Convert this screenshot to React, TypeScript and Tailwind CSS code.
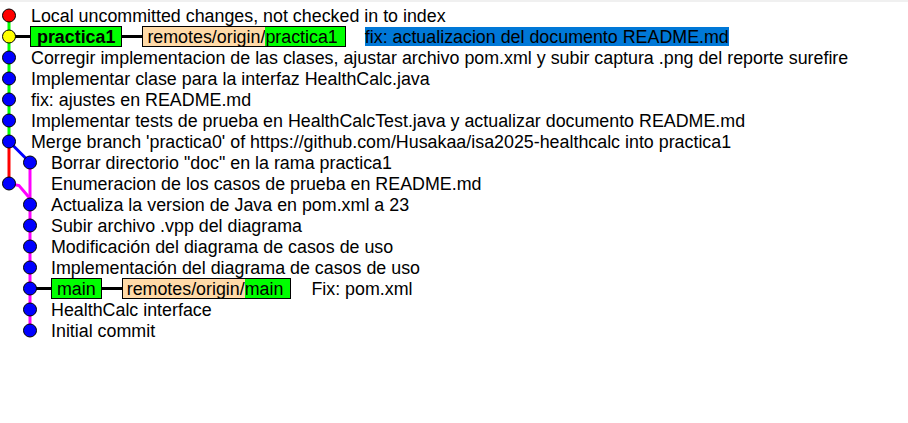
const ROW = 21;
const TOP = 5;
const cy = (i: number) => TOP + ROW * i + 10.5;
const cx = (c: number) => (c === 0 ? 9 : 30);

type Commit = {
  col: number;
  indent: number;
  text: string;
  fill: string;
};

const commits: Commit[] = [
  { col: 0, indent: 0, text: "Local uncommitted changes, not checked in to index", fill: "#ff0000" },
  { col: 0, indent: 0, text: "fix: actualizacion del documento README.md", fill: "#ffff00" },
  { col: 0, indent: 0, text: "Corregir implementacion de las clases, ajustar archivo pom.xml y subir captura .png del reporte surefire", fill: "#0000ff" },
  { col: 0, indent: 0, text: "Implementar clase para la interfaz HealthCalc.java", fill: "#0000ff" },
  { col: 0, indent: 0, text: "fix: ajustes en README.md", fill: "#0000ff" },
  { col: 0, indent: 0, text: "Implementar tests de prueba en HealthCalcTest.java y actualizar documento README.md", fill: "#0000ff" },
  { col: 0, indent: 0, text: "Merge branch 'practica0' of https://github.com/Husakaa/isa2025-healthcalc into practica1", fill: "#0000ff" },
  { col: 1, indent: 1, text: "Borrar directorio \"doc\" en la rama practica1", fill: "#0000ff" },
  { col: 0, indent: 1, text: "Enumeracion de los casos de prueba en README.md", fill: "#0000ff" },
  { col: 1, indent: 1, text: "Actualiza la version de Java en pom.xml a 23", fill: "#0000ff" },
  { col: 1, indent: 1, text: "Subir archivo .vpp del diagrama", fill: "#0000ff" },
  { col: 1, indent: 1, text: "Modificación del diagrama de casos de uso", fill: "#0000ff" },
  { col: 1, indent: 1, text: "Implementación del diagrama de casos de uso", fill: "#0000ff" },
  { col: 1, indent: 1, text: "Fix: pom.xml", fill: "#0000ff" },
  { col: 1, indent: 1, text: "HealthCalc interface", fill: "#0000ff" },
  { col: 1, indent: 1, text: "Initial commit", fill: "#0000ff" },
];

function Graph() {
  return (
    <svg
      className="absolute left-0 top-0"
      width={60}
      height={TOP + ROW * commits.length + 4}
    >
      <line x1={9} y1={cy(0)} x2={9} y2={cy(6)} stroke="#00ff00" strokeWidth={3} />
      <line x1={9} y1={cy(6)} x2={9} y2={cy(8)} stroke="#ff0000" strokeWidth={3} />
      <line x1={9} y1={cy(6)} x2={30} y2={cy(7)} stroke="#0000ff" strokeWidth={3} />
      <line x1={30} y1={cy(7)} x2={30} y2={cy(15)} stroke="#ff00ff" strokeWidth={3} />
      <polyline
        points={`9,${cy(8)} 19,${cy(8) + 2} 30,${cy(8) + 15}`}
        fill="none"
        stroke="#ff00ff"
        strokeWidth={3}
      />
      <line x1={9} y1={cy(1)} x2={31} y2={cy(1)} stroke="#000" strokeWidth={3} />
      <line x1={30} y1={cy(13)} x2={52} y2={cy(13)} stroke="#000" strokeWidth={3} />
      {commits.map((c, i) => (
        <circle key={i} cx={cx(c.col)} cy={cy(i)} r={6.5} fill={c.fill} stroke="#000" strokeWidth={1} />
      ))}
    </svg>
  );
}

function Link() {
  return <div className="w-[20px] h-[3px] bg-black shrink-0" />;
}

function RemoteTag({ branch }: { branch: string }) {
  return (
    <div className="flex h-[21px] items-stretch border border-black shrink-0">
      <span className="bg-[#ffdaa8] pl-[4px] leading-[20px]">remotes/origin/</span>
      <span className="bg-[#00ff00] pr-[7px] leading-[20px]">{branch}</span>
    </div>
  );
}

export default function App() {
  return (
    <div
      className="relative w-[908px] h-[423px] bg-white text-black text-[17.85px] overflow-hidden"
      style={{ fontFamily: '"Liberation Sans", Arial, sans-serif' }}
    >
      <div className="h-[2px] bg-[#f0f0f0]" />
      <Graph />
      <div className="relative flex flex-col pt-[3px]">
        {commits.map((c, i) => {
          const pl = c.indent === 0 ? "pl-[31px]" : "pl-[51px]";
          if (i === 1) {
            return (
              <div key={i} className="flex h-[21px] items-center whitespace-nowrap pl-[30px]">
                <div className="h-[21px] border border-black bg-[#00ff00] px-[6px] font-bold leading-[20px]">
                  practica1
                </div>
                <Link />
                <RemoteTag branch="practica1" />
                <span className="ml-[19px] bg-[#0078d7] px-0 leading-[20px] h-[19px]">{c.text}</span>
              </div>
            );
          }
          if (i === 13) {
            return (
              <div key={i} className="flex h-[21px] items-center whitespace-nowrap pl-[51px]">
                <div className="h-[21px] border border-black bg-[#00ff00] px-[5px] leading-[20px]">
                  main
                </div>
                <Link />
                <RemoteTag branch="main" />
                <span className="ml-[20px] pt-[1px]">{c.text}</span>
              </div>
            );
          }
          return (
            <div key={i} className={`flex h-[21px] items-center whitespace-nowrap pt-[2px] ${pl}`}>
              {c.text}
            </div>
          );
        })}
      </div>
    </div>
  );
}
